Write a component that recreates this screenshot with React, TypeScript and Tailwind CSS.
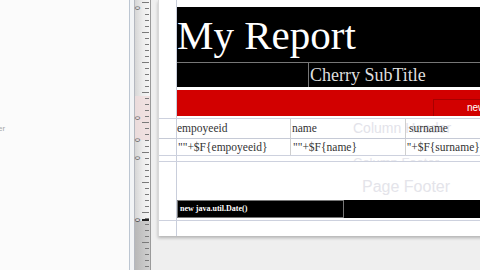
import React from "react";

function Ruler() {
  const ticks: React.ReactNode[] = [];
  for (let y = 2; y < 270; y += 6) {
    const long = (y - 2) % 30 === 0;
    ticks.push(
      <line key={y} x1={long ? 13 : 16} x2={20} y1={y + 0.5} y2={y + 0.5} stroke="#7a7a7a" strokeWidth={1} />
    );
  }
  const labels = [8, 118, 140, 158];
  return (
    <svg width="22" height="270" viewBox="0 0 22 270" className="block shrink-0">
      <rect x="0" y="0" width="22" height="270" fill="#f2f4f6" />
      <rect x="0" y="0" width="1" height="270" fill="#bcc6d2" />
      <rect x="5" y="0" width="1" height="270" fill="#b4b8c0" />
      <defs>
        <linearGradient id="rb" x1="0" x2="1" y1="0" y2="0">
          <stop offset="0" stopColor="#d6d6d6" />
          <stop offset="0.5" stopColor="#ececec" />
          <stop offset="1" stopColor="#f6f6f6" />
        </linearGradient>
        <linearGradient id="rd" x1="0" x2="1" y1="0" y2="0">
          <stop offset="0" stopColor="#b8b8b8" />
          <stop offset="1" stopColor="#d0d0d0" />
        </linearGradient>
      </defs>
      <rect x="6" y="0" width="15" height="270" fill="url(#rb)" />
      <rect x="6" y="96" width="15" height="44" fill="#efdcdc" opacity="0.8" />
      <rect x="6" y="221" width="15" height="49" fill="url(#rd)" />
      <rect x="21" y="0" width="1" height="270" fill="#9a9a9a" />
      {ticks}
      {labels.map((y) => (
        <text
          key={y}
          x={0}
          y={0}
          transform={`translate(11 ${y}) rotate(-90)`}
          fontSize="7"
          fontFamily="Liberation Sans, sans-serif"
          fill="#555"
          textAnchor="middle"
        >
          0
        </text>
      ))}
      <text
        x={0}
        y={0}
        transform="translate(11 220) rotate(-90)"
        fontSize="7"
        fontFamily="Liberation Sans, sans-serif"
        fill="#333"
        textAnchor="middle"
      >
        0
      </text>
      <rect x="13" y="219" width="7" height="2" fill="#222" />
    </svg>
  );
}

function Row({ h, children, className = "" }: { h: string; children?: React.ReactNode; className?: string }) {
  return (
    <div className={`flex ${h}`}>
      <div className="w-[18px] shrink-0 border-r border-[#c9cedb]" />
      <div className={`flex-1 relative min-w-0 ${className}`}>{children}</div>
    </div>
  );
}

const serif = "font-['Liberation_Serif',serif]";

export default function App() {
  return (
    <div className="flex w-[480px] h-[270px] overflow-hidden bg-[#fbfbfb]">
      <div className="w-[129px] shrink-0 relative flex flex-col">
        <div className="h-[124px]" />
        <div className="text-[8px] leading-[9px] text-[#a8a8a8] font-['Liberation_Sans',sans-serif] -ml-[2px]">er</div>
      </div>
      <Ruler />
      <div className="flex-1 flex flex-col bg-[#efefef] pl-[7px]">
        <div className="h-[236px] bg-white flex flex-col border-l border-[#d8d8d8] shadow-[0_2px_3px_rgba(0,0,0,0.25)] overflow-hidden">
          <Row h="h-[7px]" />
          <Row h="h-[80px]" className="bg-black flex flex-col">
            <div className={`h-[55px] ${serif} text-white text-[41px] leading-[55px] pt-[1px] whitespace-nowrap`}>My Report</div>
            <div className="h-px bg-[#777]" />
            <div className="flex-1 flex">
              <div className="w-[131px]" />
              <div className={`flex-1 border-l border-[#777] ${serif} text-[#dedede] text-[18px] leading-[24px] pl-[1px] whitespace-nowrap`}>
                Cherry SubTitle
              </div>
            </div>
          </Row>
          <Row h="h-[3px]" />
          <Row h="h-[26px]" className="bg-[#d20000] flex flex-col">
            <div className="h-[9px]" />
            <div className="flex flex-1">
              <div className="w-[256px]" />
              <div className="flex-1 border-l border-t border-[#a80000] text-white text-[10px] leading-[15px] font-['Liberation_Sans',sans-serif] pl-[33px]">
                new
              </div>
            </div>
          </Row>
          <Row h="h-[2px]" />
          <div className="h-px bg-[#cdd1de]" />
          <Row h="h-[19px]" className="flex">
            <div className="absolute left-[176px] top-[1px] text-[14px] leading-[16px] text-[#e3e3ea] font-['Liberation_Sans',sans-serif] whitespace-nowrap">
              Column Header
            </div>
            <div className={`relative w-[114px] border-r border-[#cfcfcf] ${serif} text-[11.5px] leading-[18px] text-[#333] whitespace-nowrap`}>empoyeeid</div>
            <div className={`relative w-[115px] border-r border-[#cfcfcf] ${serif} text-[11.5px] leading-[18px] text-[#333] pl-px whitespace-nowrap`}>name</div>
            <div className={`relative flex-1 ${serif} text-[11.5px] leading-[18px] text-[#333] pl-[3px] whitespace-nowrap`}>surname</div>
          </Row>
          <div className="h-px bg-[#c6cad6]" />
          <Row h="h-[16px]" className="flex">
            <div className={`w-[114px] border-r border-[#cfcfcf] ${serif} text-[11.5px] leading-[16px] text-[#333] pl-[1px] whitespace-nowrap`}>""+$F{"{"}empoyeeid{"}"}</div>
            <div className={`w-[115px] border-r border-[#cfcfcf] ${serif} text-[11.5px] leading-[16px] text-[#333] pl-[2px] whitespace-nowrap`}>""+$F{"{"}name{"}"}</div>
            <div className={`flex-1 ${serif} text-[11.5px] leading-[16px] text-[#333] pl-[1px] whitespace-nowrap overflow-hidden`}>''+$F{"{"}surname{"}"}</div>
          </Row>
          <div className="h-px bg-[#cdd1de]" />
          <Row h="h-[5px]" className="overflow-hidden">
            <div className="absolute left-[176px] top-[-1px] text-[13px] leading-[16px] text-[#e6e6ec] font-['Liberation_Sans',sans-serif] whitespace-nowrap">
              Column Footer
            </div>
          </Row>
          <div className="h-px bg-[#cdd1de]" />
          <Row h="h-[58px]" className="flex flex-col">
            <div className="h-[38px] flex items-center">
              <div className="pl-[185px] pt-[11px] text-[16px] leading-[18px] text-[#e4e4ea] font-['Liberation_Sans',sans-serif] whitespace-nowrap">
                Page Footer
              </div>
            </div>
            <div className="h-[18px] bg-black flex">
              <div className={`w-[167px] border border-[#777] ${serif} text-white text-[8px] font-bold leading-[16px] pl-[2px] whitespace-nowrap`}>
                new java.util.Date()
              </div>
            </div>
          </Row>
          <div className="h-px bg-[#cdd1de]" />
          <Row h="flex-1" />
        </div>
      </div>
    </div>
  );
}
